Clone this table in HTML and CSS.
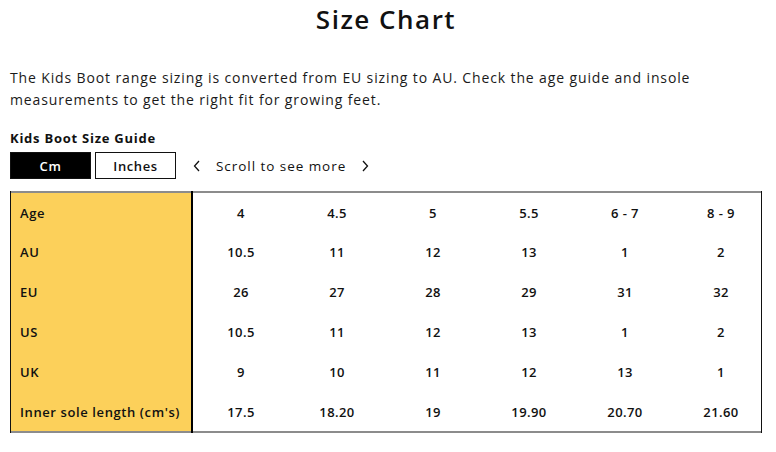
FILE: index.html
```html
<!DOCTYPE html>
<html>
<head>
<meta charset="utf-8">
<link rel="stylesheet" href="styles.css">
</head>
<body>
<h1 class="title">Size Chart</h1>
<p class="intro">The Kids Boot range sizing is converted from EU sizing to AU. Check the age guide and insole measurements to get the right fit for growing feet.</p>
<h3 class="guide-title">Kids Boot Size Guide</h3>
<div class="controls">
  <button class="unit unit-active">Cm</button>
  <button class="unit">Inches</button>
  <div class="scroll-hint">
    <svg class="chev" width="10" height="14" viewBox="0 0 10 14"><path d="M7 2 L2.5 7 L7 12" fill="none" stroke="#111" stroke-width="1.3"/></svg>
    <span class="scroll-text">Scroll to see more</span>
    <svg class="chev" width="10" height="14" viewBox="0 0 10 14"><path d="M3 2 L7.5 7 L3 12" fill="none" stroke="#111" stroke-width="1.3"/></svg>
  </div>
</div>
<div class="chart-wrap">
<table class="chart">
  <tr><th>Age</th><td>4</td><td>4.5</td><td>5</td><td>5.5</td><td>6 - 7</td><td>8 - 9</td></tr>
  <tr><th>AU</th><td>10.5</td><td>11</td><td>12</td><td>13</td><td>1</td><td>2</td></tr>
  <tr><th>EU</th><td>26</td><td>27</td><td>28</td><td>29</td><td>31</td><td>32</td></tr>
  <tr><th>US</th><td>10.5</td><td>11</td><td>12</td><td>13</td><td>1</td><td>2</td></tr>
  <tr><th>UK</th><td>9</td><td>10</td><td>11</td><td>12</td><td>13</td><td>1</td></tr>
  <tr><th>Inner sole length (cm's)</th><td>17.5</td><td>18.20</td><td>19</td><td>19.90</td><td>20.70</td><td>21.60</td></tr>
</table>
</div>
</body>
</html>
```

FILE: styles.css
```css
html, body {
  margin: 0;
  background: #fff;
}
body {
  padding: 0 14px 0 10px;
  font-family: "Open Sans", "DejaVu Sans", sans-serif;
  color: #111;
}
.title {
  margin: 0;
  font-size: 26px;
  line-height: 38px;
  font-weight: 600;
  text-align: center;
  letter-spacing: 1.5px;
}
.intro {
  margin: 29px 0 0;
  max-width: 720px;
  font-size: 14px;
  line-height: 22px;
  letter-spacing: 0.87px;
  color: #1a1a1a;
}
.guide-title {
  margin: 18px 0 0;
  font-size: 13px;
  line-height: 18px;
  font-weight: 700;
  letter-spacing: 0.75px;
}
.controls {
  margin-top: 5px;
  display: flex;
  align-items: center;
  gap: 4px;
  height: 27px;
}
.unit {
  box-sizing: border-box;
  width: 81px;
  height: 27px;
  border: 1px solid #111;
  background: #fff;
  color: #111;
  font-family: inherit;
  font-size: 13px;
  font-weight: 600;
  letter-spacing: 0.6px;
  padding: 0;
}
.unit-active {
  background: #000;
  color: #fff;
}
.scroll-hint {
  display: flex;
  align-items: center;
  margin-left: 12px;
  gap: 14px;
  font-size: 13.5px;
  letter-spacing: 0.95px;
}
.chev { display: block; }
.chart-wrap {
  margin-top: 12px;
  width: 750px;
  overflow: hidden;
  border-left: 1px solid #111;
  border-right: 1px solid #111;
}
.chart {
  border-collapse: collapse;
  table-layout: fixed;
  width: 758px;
  border-top: 2px solid #8c8c8c;
  border-bottom: 2px solid #8c8c8c;
  font-size: 13px;
}
.chart tr { height: 40px; }
.chart th {
  width: 171px;
  background: #fcd05a;
  border-right: 2px solid #000;
  text-align: left;
  padding: 0 0 0 9px;
  font-weight: 600;
  letter-spacing: 0.6px;
  white-space: nowrap;
}
.chart td {
  width: 96px;
  text-align: center;
  font-weight: 600;
  letter-spacing: 0.4px;
  padding: 0;
}
```
